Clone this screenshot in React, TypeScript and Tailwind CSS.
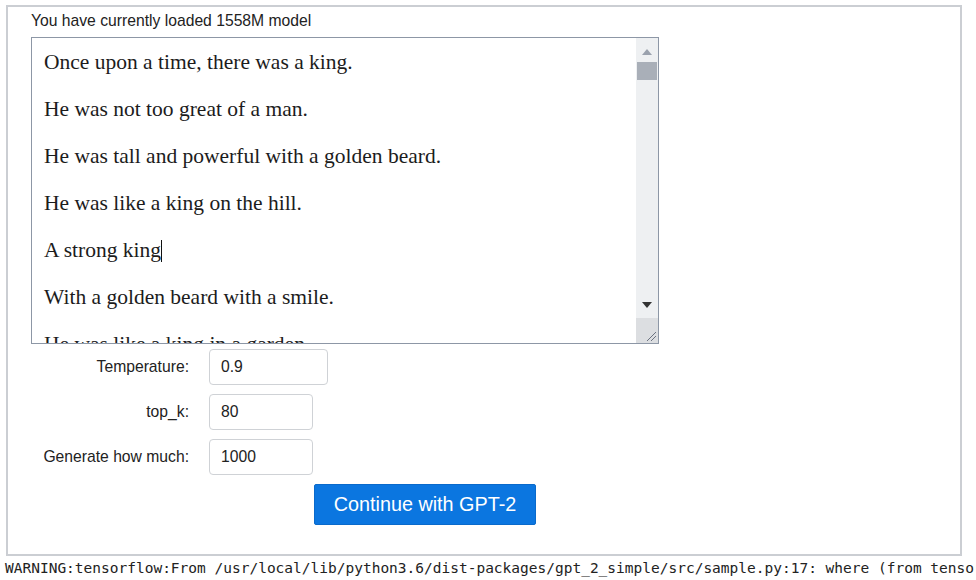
import React from 'react';

const story = [
  'Once upon a time, there was a king.',
  'He was not too great of a man.',
  'He was tall and powerful with a golden beard.',
  'He was like a king on the hill.',
  'A strong king',
  'With a golden beard with a smile.',
  'He was like a king in a garden.',
];

const fields = [
  { label: 'Temperature:', value: '0.9', width: 'w-[119px]' },
  { label: 'top_k:', value: '80', width: 'w-[104px]' },
  { label: 'Generate how much:', value: '1000', width: 'w-[104px]' },
];

function FakeScrollbar() {
  return (
    <div className="w-[22px] shrink-0 flex flex-col bg-[#eef0f2]">
      {/* up arrow */}
      <div className="h-[20px] flex items-center justify-center">
        <div className="w-0 h-0 border-l-[5px] border-r-[5px] border-b-[6px] border-l-transparent border-r-transparent border-b-[#9aa1ad] mt-[8px]" />
      </div>
      {/* thumb */}
      <div className="mx-[1px] mt-[4px] h-[18px] bg-[#a9afb8]" />
      <div className="flex-1" />
      {/* down arrow */}
      <div className="h-[20px] flex items-center justify-center">
        <div className="w-0 h-0 border-l-[5px] border-r-[5px] border-t-[6px] border-l-transparent border-r-transparent border-t-[#333] mb-[6px]" />
      </div>
      {/* resize grip */}
      <div className="relative h-[25px] bg-[#dcdee1]">
        <svg className="absolute right-[1px] bottom-[1px]" width="12" height="12" viewBox="0 0 12 12">
          <line x1="11" y1="2" x2="2" y2="11" stroke="#6b7280" strokeWidth="1" />
          <line x1="11" y1="6" x2="6" y2="11" stroke="#6b7280" strokeWidth="1" />
        </svg>
      </div>
    </div>
  );
}

export default function App() {
  return (
    <div className="w-[976px] h-[580px] bg-white overflow-hidden relative font-['Liberation_Sans',Arial,sans-serif]">
      <div className="h-[5px]" />
      <div className="ml-[6px] w-[956px] h-[551px] border-2 border-[#cbced3] pl-[23px] pt-[4px]">
        <div className="text-[15.7px] leading-[20px] text-[#222]">You have currently loaded 1558M model</div>

        {/* story box */}
        <div className="mt-[6px] w-[628px] h-[307px] border border-[#8d97a6] flex bg-white">
          <div className="flex-1 overflow-hidden pl-[12px] pt-[13px] font-['Liberation_Serif','Times_New_Roman',serif] text-[21.5px] leading-[23.5px] text-[#1c1c1c]">
            {story.map((line, i) => (
              <div key={i} className="mb-[23.5px] whitespace-nowrap">
                {line}
                {i === 4 && <span className="inline-block w-[1px] h-[22px] bg-[#111] align-middle -mt-[3px]" />}
              </div>
            ))}
          </div>
          <FakeScrollbar />
        </div>

        {/* parameters */}
        <div className="mt-[5px] flex flex-col gap-[9px] -ml-[23px]">
          {fields.map((f) => (
            <div key={f.label} className="flex items-center">
              <div className="w-[181px] text-right text-[15.7px] text-[#222]">{f.label}</div>
              <div
                className={`ml-[20px] h-[36px] ${f.width} border border-[#cfd2d6] rounded-[4px] flex items-center pl-[11px] text-[15.7px] text-[#222]`}
              >
                {f.value}
              </div>
            </div>
          ))}
        </div>

        <button className="mt-[9px] ml-[283px] w-[222px] h-[41px] bg-[#0b76e0] text-white text-[19.8px] rounded-[2px] border border-[#0a6acb]">
          Continue with GPT-2
        </button>
      </div>

      <div className="pl-[5px] pt-[2px] whitespace-nowrap text-[14.5px] leading-[20px] text-[#222] font-['DejaVu_Sans_Mono','Liberation_Mono',monospace]">
        WARNING:tensorflow:From /usr/local/lib/python3.6/dist-packages/gpt_2_simple/src/sample.py:17: where (from tensorflow.python.ops.array_ops) is deprecated
      </div>
    </div>
  );
}
